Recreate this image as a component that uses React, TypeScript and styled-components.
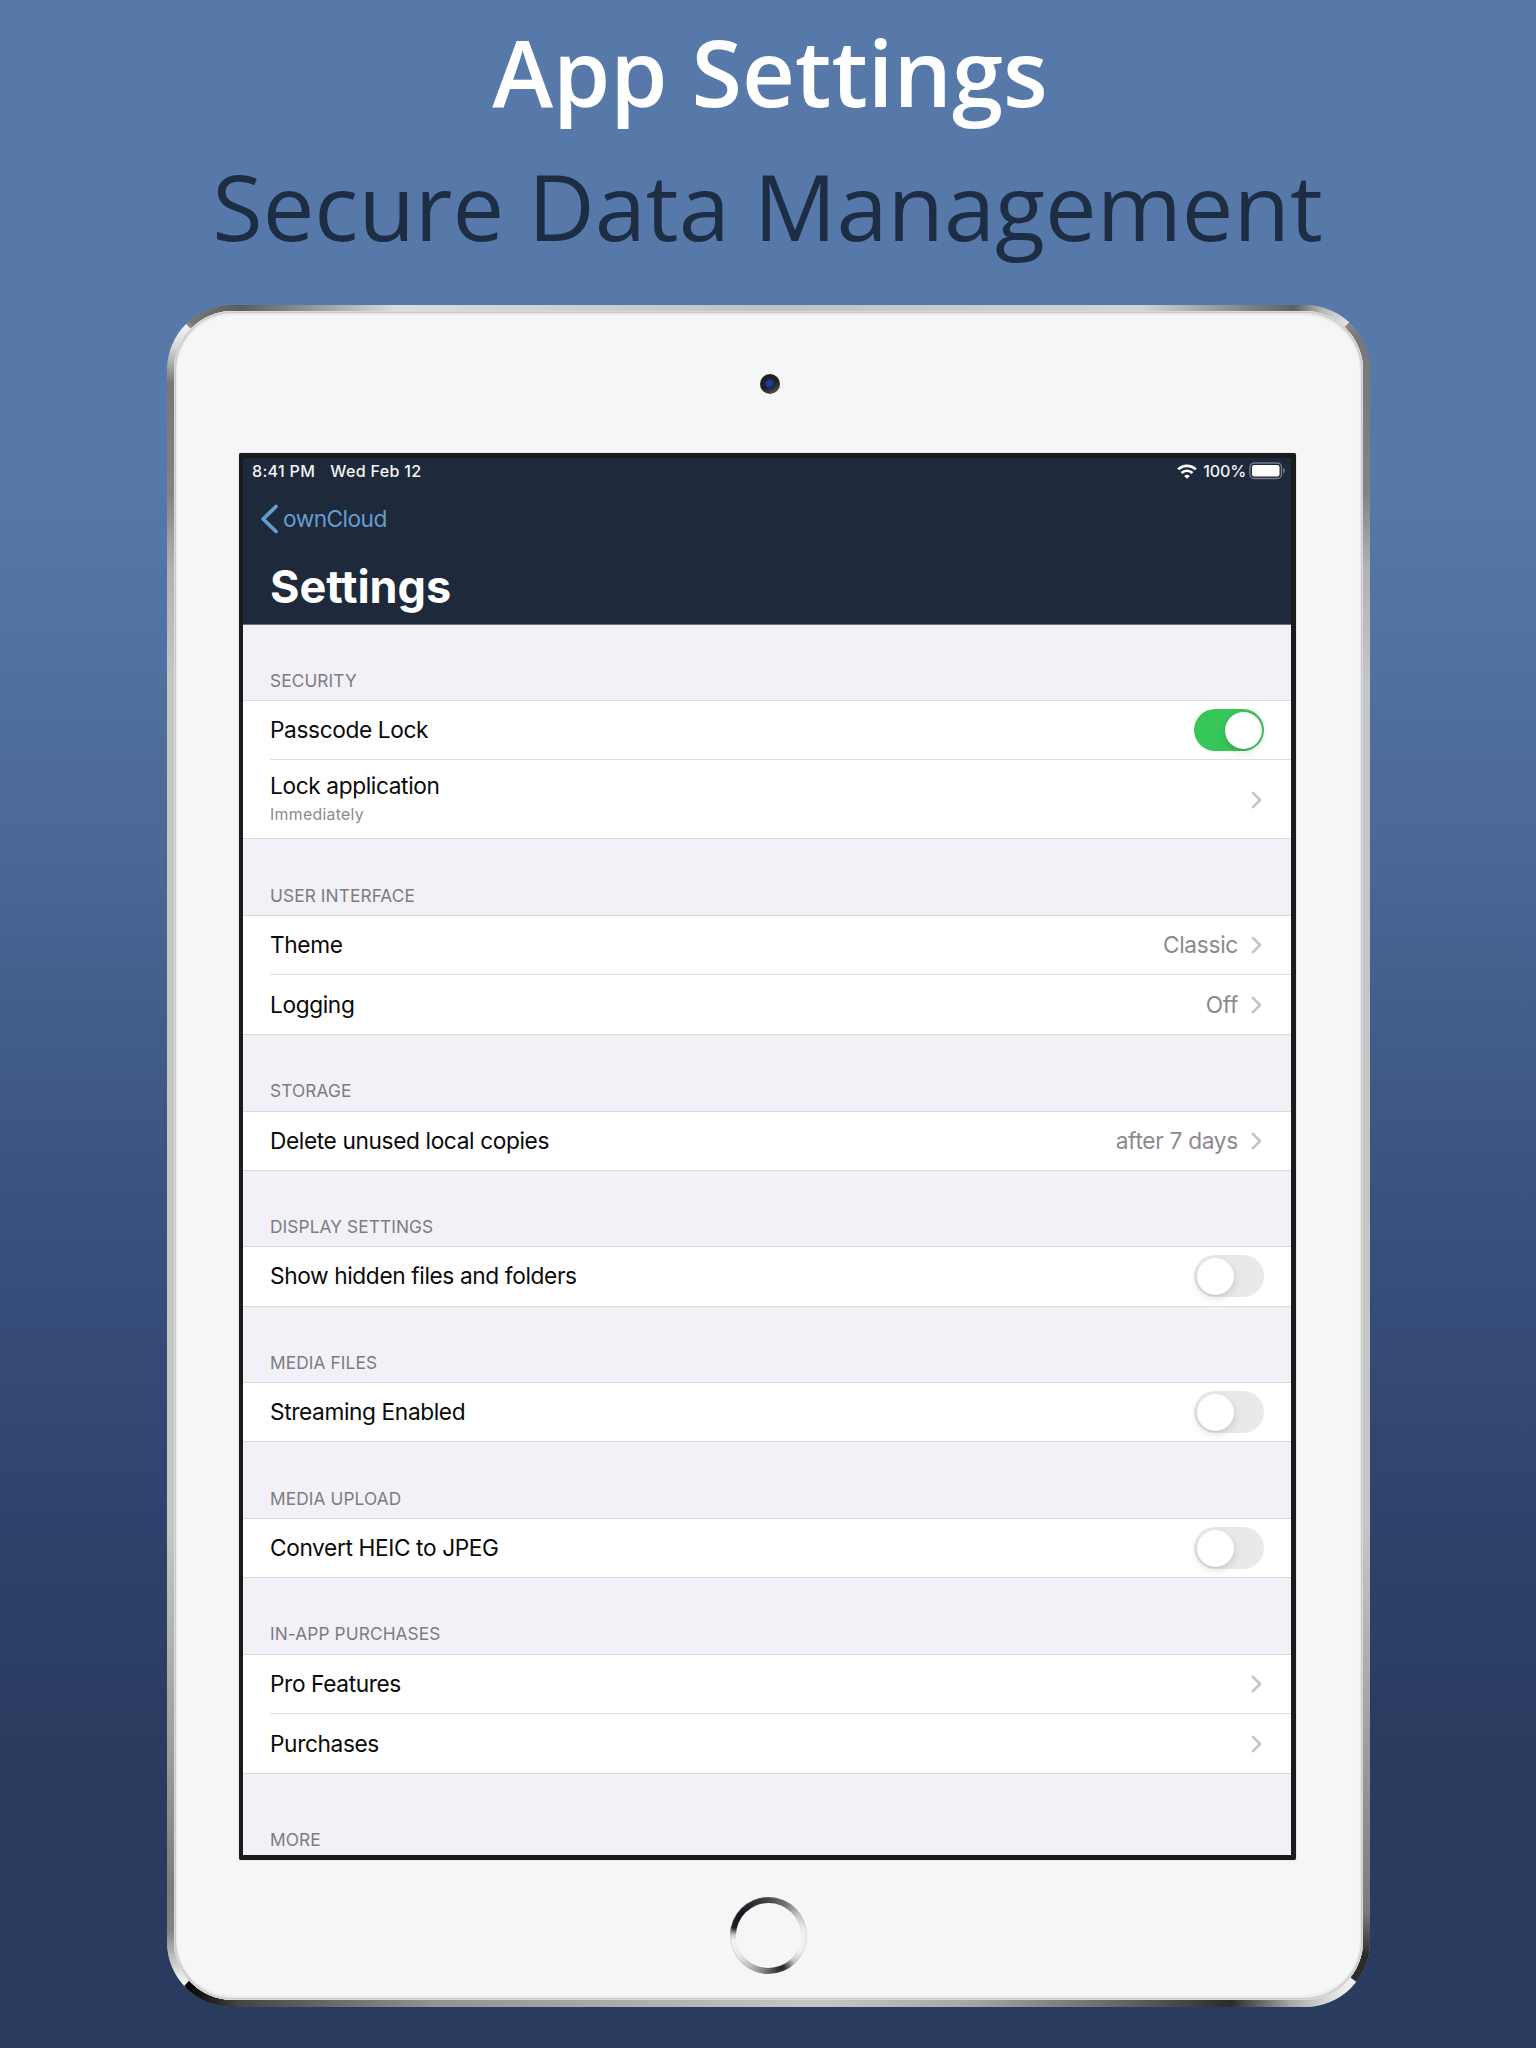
import React from "react";
import styled, { createGlobalStyle } from "styled-components";

const Global = createGlobalStyle`
  * { box-sizing: border-box; }
  body { margin: 0; background: #293b5e; }
`;

const Page = styled.main`
  width: 1536px;
  height: 2048px;
  overflow: hidden;
  display: flex;
  flex-direction: column;
  align-items: center;
  font-family: Inter, "Liberation Sans", sans-serif;
  background: linear-gradient(180deg, #5779aa 0px, #5679a9 480px, #4a6898 840px, #3c5482 1160px, #2f426b 1520px, #293b5e 1780px, #293b5e 2048px);
`;

const Heading = styled.header`
  height: 305px;
  flex: none;
  padding-top: 5px;
  text-align: center;
  font-family: "Open Sans", "Noto Sans", sans-serif;
  font-size: 92px;
  line-height: 134px;
  white-space: nowrap;
`;
const Title = styled.h1`
  margin: 0;
  padding-left: 4px;
  font-size: inherit;
  font-weight: 600;
  color: #fff;
`;
const Subtitle = styled.p`
  margin: 0;
  padding-right: 1px;
  color: #1d2d44;
`;

const Tablet = styled.section`
  position: relative;
  width: 1203px;
  height: 1702px;
  flex: none;
  margin-left: 1px;
  padding: 6px 7px 7px;
  border-radius: 65px;
  background: #888;
  overflow: hidden;
`;
const Rim = styled.svg`
  position: absolute;
  inset: 0;
`;
const Face = styled.div`
  position: relative;
  height: 100%;
  border-radius: 59px;
  display: flex;
  flex-direction: column;
  align-items: center;
  background: #f4f6f8;
  box-shadow: inset 0 0 0 1px #d9d9d9, inset 0 0 0 2px #c9c9c9, inset 0 0 0 3px #e9e9ea, inset 0 2px 3px 1px #dcdcdc, inset 0 -2px 3px 1px #dcdcdc;
`;
const Camera = styled.div`
  width: 20px;
  height: 20px;
  margin: 62.5px 0 59.5px 2px;
  flex: none;
  border-radius: 50%;
  background: radial-gradient(circle at 48% 48%, #1d3f9c 0 2px, #17307c 4px, #1b2236 5px, transparent 6px), linear-gradient(150deg, #20211f 55%, #555 90%);
`;
const Screen = styled.div`
  width: 1057px;
  height: 1407px;
  flex: none;
  margin-left: -2px;
  border: solid #1b1b1c;
  border-width: 5px 5px 5px 4px;
  border-radius: 2px;
  box-shadow: 0 0 1px #777;
  background: #f2f1f7;
  overflow: hidden;
`;
const HomeButton = styled.div`
  width: 77px;
  height: 77px;
  flex: none;
  margin-top: 37px;
  padding: 6px;
  border-radius: 50%;
  box-shadow: inset 0 0 0 1px rgba(150, 150, 150, 0.25);
  background: conic-gradient(from 0deg, #444648, #707274 28deg, #c4c6c7 55deg, #eceded 80deg, #f5f5f5 115deg, #c9c9c9 135deg, #28292b 155deg, #333 165deg, #777 185deg, #bbb 210deg, #e8e8e8 235deg, #f4f4f4 262deg, #ccc 271deg, #1c1d20 283deg, #17181b 310deg, #303234 340deg, #444648);
`;
const HomeFace = styled.div`
  height: 100%;
  border-radius: 50%;
  background: #f4f6f8;
`;

const NavArea = styled.div`
  height: 167px;
  color: #fff;
  background: #1e293b;
  border-bottom: 1px solid #6a707b;
`;
const StatusBar = styled.div`
  height: 26px;
  display: flex;
  align-items: center;
  padding: 0 5px 0 9px;
  font-size: 16.1px;
  font-weight: 500;
  letter-spacing: 0.3px;
  color: #f2f3f5;
`;
const DateText = styled.span`
  margin-left: 15px;
  flex: 1;
`;
const Battery = styled.svg`
  margin-left: 3px;
`;
const Percent = styled.span`
  margin-left: 6px;
  letter-spacing: -0.2px;
`;
const BackLink = styled.div`
  height: 69px;
  display: flex;
  align-items: center;
  padding-left: 17px;
  gap: 4px;
  font-size: 22.7px;
  letter-spacing: -0.55px;
  color: #659dd0;
`;
const PageTitle = styled.h2`
  margin: 0;
  padding: 2px 0 0 27px;
  font-size: 45px;
  line-height: 64px;
  font-weight: 700;
  letter-spacing: -0.05px;
`;

const SectionLabel = styled.h3<{ $h?: number }>`
  height: ${(p) => p.$h ?? 75.75}px;
  margin: 0;
  padding: 0 0 7.5px 27px;
  display: flex;
  align-items: flex-end;
  font-size: 17.3px;
  line-height: 24px;
  font-weight: 400;
  letter-spacing: 0.1px;
  color: #7c7c81;
`;
const Group = styled.div`
  background: #fff;
  border-top: 1px solid #d9d9dc;
  border-bottom: 1px solid #d9d9dc;
`;
const Row = styled.div<{ $h: number }>`
  height: ${(p) => p.$h}px;
  margin-left: 27px;
  padding-right: 27px;
  display: flex;
  align-items: center;
  & + & {
    padding-top: 2px;
    border-top: 1px solid #dcdcde;
  }
`;
const RowText = styled.div`
  flex: 1;
  font-size: 22.7px;
  line-height: 28px;
  letter-spacing: -0.38px;
  color: #0a0a0a;
`;
const RowDetail = styled.div`
  padding-top: 1px;
  font-size: 15.8px;
  letter-spacing: 0.32px;
  color: #8a8a8e;
`;
const RowValue = styled.span`
  font-size: 22.7px;
  line-height: 28px;
  letter-spacing: -0.3px;
  margin-right: 13px;
  color: #8a8a8d;
`;
const Switch = styled.div<{ $on?: boolean }>`
  width: 70px;
  height: 42px;
  padding: 2.5px;
  display: flex;
  justify-content: ${(p) => (p.$on ? "flex-end" : "flex-start")};
  border-radius: 21px;
  background: ${(p) => (p.$on ? "#37c759" : "#e9e9eb")};
  &::before {
    content: "";
    width: 37px;
    height: 37px;
    border-radius: 50%;
    background: #fff;
    box-shadow: 0 3px 8px rgba(0, 0, 0, 0.14), 0 1px 1px rgba(0, 0, 0, 0.06);
  }
`;

const ChevronIcon = styled.svg`
  margin-right: 1px;
`;
const Chevron = () => (
  <ChevronIcon width="12" height="18" viewBox="0 0 12 18" fill="none">
    <path d="M2 1.8 9 9 2 16.2" stroke="#c4c4c6" strokeWidth="2.6" strokeLinecap="round" strokeLinejoin="round" />
  </ChevronIcon>
);

type Item = { text: string; detail?: string; value?: string; toggle?: "on" | "off" };
const sections: { label: string; labelHeight?: number; rows: Item[] }[] = [
  { label: "SECURITY", labelHeight: 75, rows: [{ text: "Passcode Lock", toggle: "on" }, { text: "Lock application", detail: "Immediately" }] },
  { label: "USER INTERFACE", rows: [{ text: "Theme", value: "Classic" }, { text: "Logging", value: "Off" }] },
  { label: "STORAGE", rows: [{ text: "Delete unused local copies", value: "after 7 days" }] },
  { label: "DISPLAY SETTINGS", rows: [{ text: "Show hidden files and folders", toggle: "off" }] },
  { label: "MEDIA FILES", rows: [{ text: "Streaming Enabled", toggle: "off" }] },
  { label: "MEDIA UPLOAD", rows: [{ text: "Convert HEIC to JPEG", toggle: "off" }] },
  { label: "IN-APP PURCHASES", rows: [{ text: "Pro Features" }, { text: "Purchases" }] },
];

function rowHeight(item: Item, index: number, count: number) {
  if (item.detail) return 79.2;
  if (count === 1) return 58.1;
  return index === 0 ? 58.1 : 59.7;
}

export default function App() {
  return (
    <>
      <Global />
      <Page>
        <Heading>
          <Title>App Settings</Title>
          <Subtitle>Secure Data Management</Subtitle>
        </Heading>
        <Tablet>
          <Rim width="1203" height="1702" viewBox="0 0 1203 1702">
            <defs>
              <linearGradient id="top" gradientUnits="userSpaceOnUse" x1="0" y1="0" x2="1203" y2="0">
                <stop offset="0.02" stopColor="#777" />
                <stop offset="0.062" stopColor="#5c5c5c" />
                <stop offset="0.19" stopColor="#dcdcdc" />
                <stop offset="0.5" stopColor="#c2c2c2" />
                <stop offset="0.81" stopColor="#d4d4d4" />
                <stop offset="0.937" stopColor="#5f5f5f" />
                <stop offset="0.96" stopColor="#b5b5b5" />
                <stop offset="0.985" stopColor="#ededed" />
              </linearGradient>
              <linearGradient id="bottom" gradientUnits="userSpaceOnUse" x1="0" y1="0" x2="1203" y2="0">
                <stop offset="0.02" stopColor="#0a0a0a" />
                <stop offset="0.06" stopColor="#444" />
                <stop offset="0.22" stopColor="#929292" />
                <stop offset="0.54" stopColor="#c6c6c6" />
                <stop offset="0.67" stopColor="#a5a5a5" />
                <stop offset="0.8" stopColor="#626262" />
                <stop offset="0.885" stopColor="#2b2b2b" />
                <stop offset="0.935" stopColor="#a9a9a9" />
                <stop offset="0.98" stopColor="#eef0ef" />
              </linearGradient>
              <linearGradient id="left" gradientUnits="userSpaceOnUse" x1="0" y1="0" x2="0" y2="1702">
                <stop offset="0.012" stopColor="#f2f4f3" />
                <stop offset="0.025" stopColor="#d5d6d5" />
                <stop offset="0.046" stopColor="#777" />
                <stop offset="0.11" stopColor="#828282" />
                <stop offset="0.155" stopColor="#b2b2b1" />
                <stop offset="0.22" stopColor="#c4c6c4" />
                <stop offset="0.72" stopColor="#c4c6c4" />
                <stop offset="0.86" stopColor="#999" />
                <stop offset="0.93" stopColor="#7c7c7c" />
                <stop offset="0.955" stopColor="#828282" />
                <stop offset="0.985" stopColor="#f2f4f3" />
              </linearGradient>
              <linearGradient id="right" gradientUnits="userSpaceOnUse" x1="0" y1="0" x2="0" y2="1702">
                <stop offset="0.01" stopColor="#888" />
                <stop offset="0.02" stopColor="#777" />
                <stop offset="0.11" stopColor="#828282" />
                <stop offset="0.155" stopColor="#b2b2b1" />
                <stop offset="0.22" stopColor="#c4c6c4" />
                <stop offset="0.72" stopColor="#c4c6c4" />
                <stop offset="0.86" stopColor="#999" />
                <stop offset="0.945" stopColor="#7a7a7a" />
                <stop offset="0.97" stopColor="#2b2b2b" />
              </linearGradient>
            </defs>
            <path d="M0 0 60 60V1642L0 1702Z" fill="url(#left)" />
            <path d="M1203 0 1143 60V1642L1203 1702Z" fill="url(#right)" />
            <path d="M5 0H1200L1130 68H73Z" fill="url(#top)" />
            <path d="M-2 1702H1222L1162 1656H40Z" fill="url(#bottom)" />
          </Rim>
          <Face>
            <Camera />
            <Screen>
              <NavArea>
                <StatusBar>
                  <span>8:41 PM</span>
                  <DateText>Wed Feb 12</DateText>
                  <svg width="20" height="15" viewBox="0 0 20 15" fill="none" stroke="#fff" strokeWidth="2.7">
                    <path d="M1.2 5.4a12.6 12.6 0 0 1 17.6 0M4.5 9a7.8 7.8 0 0 1 11 0" />
                    <path d="M10 14.8 7.2 12a4 4 0 0 1 5.6 0Z" fill="#fff" stroke="none" />
                  </svg>
                  <Percent>100%</Percent>
                  <Battery width="37" height="18" viewBox="0 0 37 18">
                    <rect x="1" y="1" width="31.5" height="15.5" rx="4.2" fill="none" stroke="#747b87" strokeWidth="1.4" />
                    <rect x="3" y="3" width="27.5" height="11.5" rx="2.2" fill="#fff" />
                    <path d="M34.2 6v5.4c2.4-.9 2.4-4.5 0-5.4Z" fill="#747b87" />
                  </Battery>
                </StatusBar>
                <BackLink>
                  <svg width="19" height="30" viewBox="0 0 19 30" fill="none">
                    <path d="M16 2.5 3.2 15 16 27.5" stroke="#659dd0" strokeWidth="3.8" strokeLinecap="round" strokeLinejoin="round" />
                  </svg>
                  ownCloud
                </BackLink>
                <PageTitle>Settings</PageTitle>
              </NavArea>
              {sections.map((section) => (
                <React.Fragment key={section.label}>
                  <SectionLabel $h={section.labelHeight}>{section.label}</SectionLabel>
                  <Group>
                    {section.rows.map((row, index) => (
                      <Row key={row.text} $h={rowHeight(row, index, section.rows.length)}>
                        <RowText>
                          {row.text}
                          {row.detail && <RowDetail>{row.detail}</RowDetail>}
                        </RowText>
                        {row.value && <RowValue>{row.value}</RowValue>}
                        {row.toggle ? <Switch $on={row.toggle === "on"} /> : <Chevron />}
                      </Row>
                    ))}
                  </Group>
                </React.Fragment>
              ))}
              <SectionLabel $h={85.8}>MORE</SectionLabel>
            </Screen>
            <HomeButton>
              <HomeFace />
            </HomeButton>
          </Face>
        </Tablet>
      </Page>
    </>
  );
}
